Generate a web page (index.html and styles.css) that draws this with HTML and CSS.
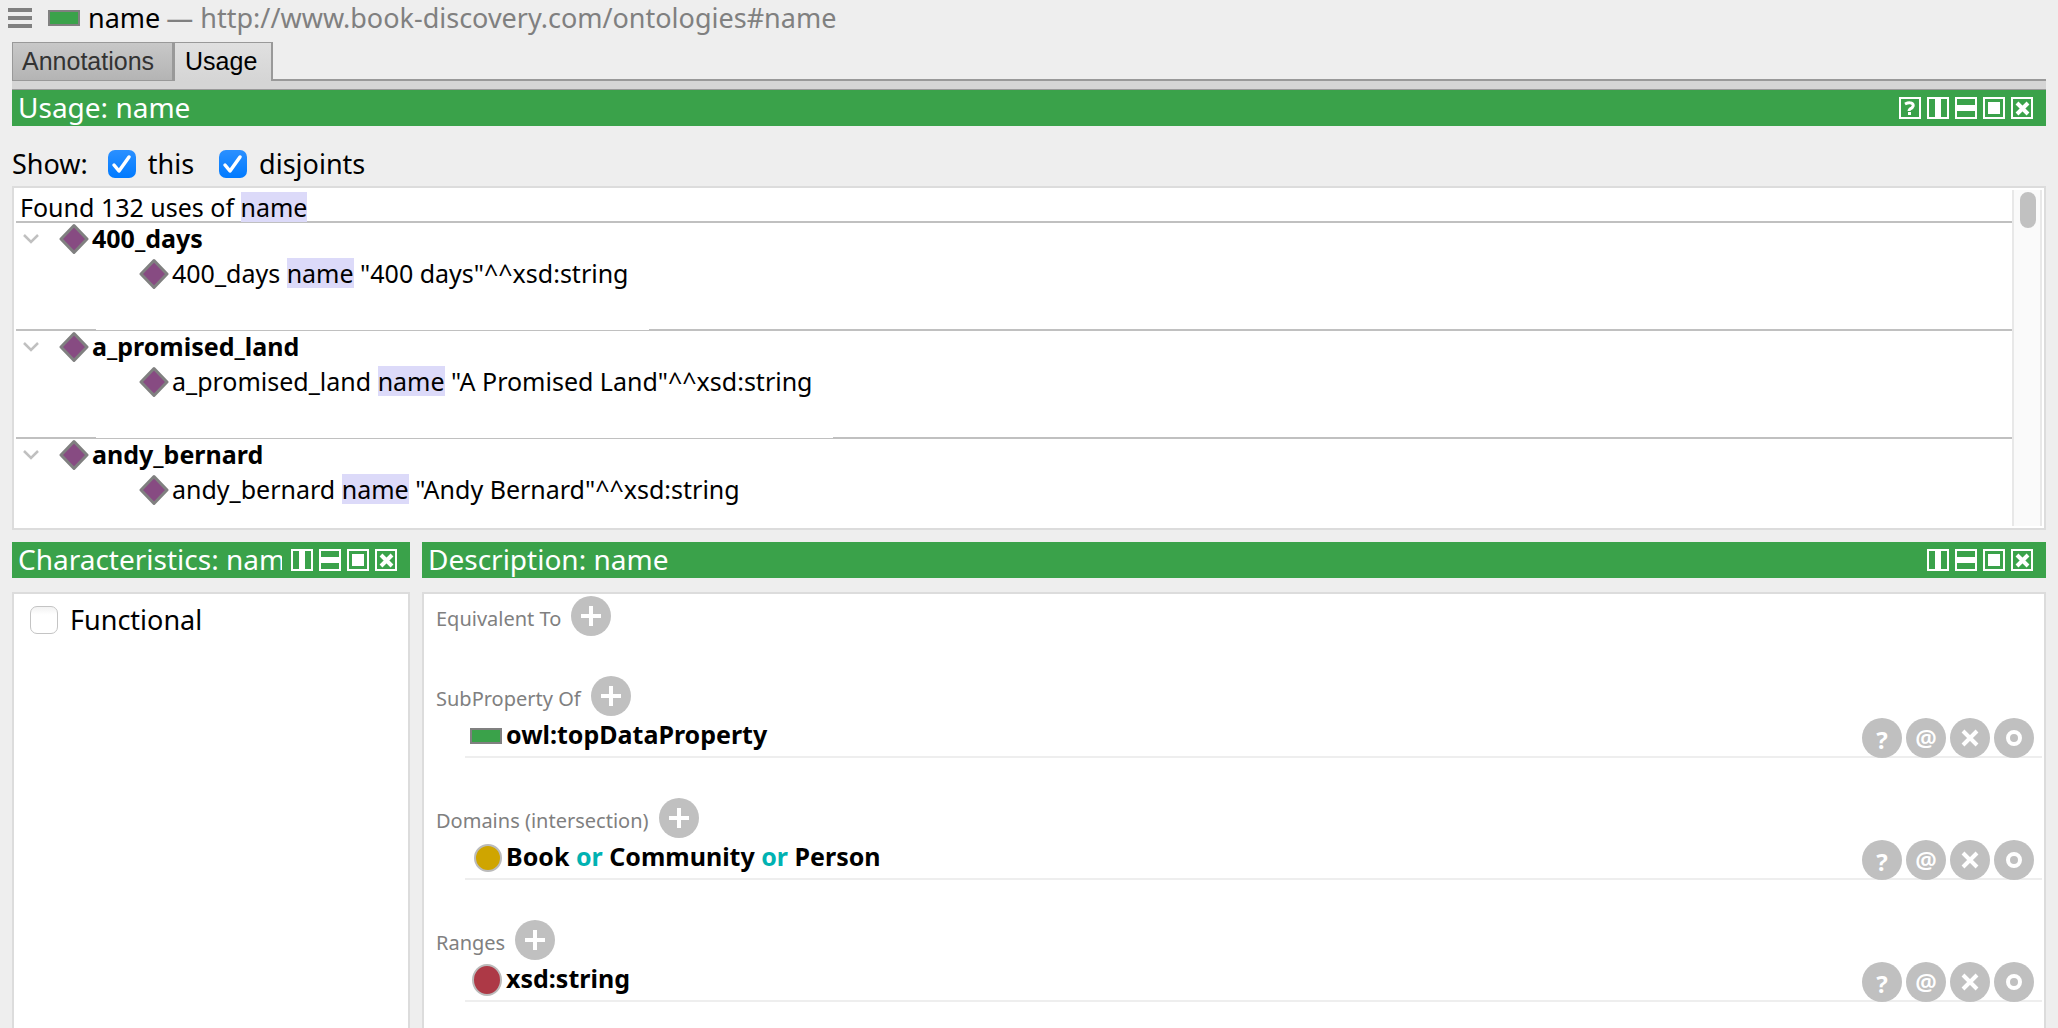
FILE: index.html
```html
<!DOCTYPE html>
<html lang="en">
<head>
<meta charset="utf-8">
<title>name</title>
<link rel="stylesheet" href="styles.css">
</head>
<body>
<svg class="defs" aria-hidden="true">
  <symbol id="i-help" viewBox="0 0 22 22"><path d="M1 1h20v20H1z" fill="none" stroke="currentColor" stroke-width="2"/><path d="M6 7q4-2 6-1c4 1 2 5-1 6q-1 1-1 2" fill="none" stroke="currentColor" stroke-width="3"/><path d="M9 15h3v3H9z" fill="currentColor"/></symbol>
  <symbol id="i-columns" viewBox="0 0 22 22"><path d="M1 1h20v20H1z" fill="none" stroke="currentColor" stroke-width="2"/><path d="M8 1h6v20H8z" fill="currentColor"/></symbol>
  <symbol id="i-rows" viewBox="0 0 22 22"><path d="M1 1h20v20H1z" fill="none" stroke="currentColor" stroke-width="2"/><path d="M1 8h20v6H1z" fill="currentColor"/></symbol>
  <symbol id="i-float" viewBox="0 0 22 22"><path d="M1 1h20v20H1z" fill="none" stroke="currentColor" stroke-width="2"/><path d="M5 5h12v12H5z" fill="currentColor"/></symbol>
  <symbol id="i-close" viewBox="0 0 22 22"><path d="M1 1h20v20H1z" fill="none" stroke="currentColor" stroke-width="2"/><path d="M6 6l11 11M17 6L6 17" fill="none" stroke="currentColor" stroke-width="4"/></symbol>
  <symbol id="i-plus" viewBox="0 0 40 40"><circle cx="20" cy="20" r="20" fill="#c0c0c0"/><path d="M20 10v20M10 20h20" stroke="#fff" stroke-width="4"/></symbol>
  <symbol id="i-delete" viewBox="0 0 40 40"><path d="M13 13l14 14M27 13L13 27" stroke="#fff" stroke-width="4"/></symbol>
  <symbol id="i-edit" viewBox="0 0 40 40"><circle cx="20" cy="20" r="6" fill="none" stroke="#fff" stroke-width="4"/></symbol>
  <symbol id="i-chevron" viewBox="0 0 16 10"><path d="M1 1l7 7 7-7" fill="none" stroke="#c0c0c0" stroke-width="2.5"/></symbol>
  <symbol id="i-individual" viewBox="0 0 30 32"><path d="M15 2.500L28 16 15 29.500 2 16z" fill="#874b82" stroke="#808080" stroke-width="3" stroke-linejoin="round"/></symbol>
</svg>

<header class="entity-bar">
  <button class="menu" aria-label="Menu"><span class="bar"></span><span class="bar"></span><span class="bar"></span></button>
  <span class="property-icon"></span>
  <h1 class="entity-name">name</h1>
  <span class="entity-iri">— http://www.book-discovery.com/ontologies#name</span>
</header>

<nav class="tabs" role="tablist">
  <button class="tab" role="tab">Annotations</button>
  <button class="tab tab-active" role="tab" aria-selected="true">Usage</button>
</nav>

<main class="views">
  <section>
    <header class="view-head">
      <h2 class="view-title">Usage: name</h2>
      <div class="view-tools">
        <button class="tool" aria-label="Help"><svg><use href="#i-help"/></svg></button>
        <button class="tool" aria-label="Split vertically"><svg><use href="#i-columns"/></svg></button>
        <button class="tool" aria-label="Split horizontally"><svg><use href="#i-rows"/></svg></button>
        <button class="tool" aria-label="Float"><svg><use href="#i-float"/></svg></button>
        <button class="tool" aria-label="Close"><svg><use href="#i-close"/></svg></button>
      </div>
    </header>
    <div class="filters">
      <span class="filters-label">Show:</span>
      <label class="check"><input type="checkbox" checked>this</label>
      <label class="check"><input type="checkbox" checked>disjoints</label>
    </div>
    <div class="usage">
      <div class="usage-list">
        <p class="found">Found 132 uses of <mark>name</mark></p>
        <div class="group">
          <h3 class="group-title"><svg class="chevron"><use href="#i-chevron"/></svg><svg class="individual"><use href="#i-individual"/></svg><span>400_days</span></h3>
          <p class="axiom"><svg class="individual"><use href="#i-individual"/></svg><span>400_days <mark>name</mark> "400 days"^^xsd:string</span></p>
        </div>
        <div class="group">
          <h3 class="group-title"><svg class="chevron"><use href="#i-chevron"/></svg><svg class="individual"><use href="#i-individual"/></svg><span>a_promised_land</span></h3>
          <p class="axiom"><svg class="individual"><use href="#i-individual"/></svg><span>a_promised_land <mark>name</mark> "A Promised Land"^^xsd:string</span></p>
        </div>
        <div class="group">
          <h3 class="group-title"><svg class="chevron"><use href="#i-chevron"/></svg><svg class="individual"><use href="#i-individual"/></svg><span>andy_bernard</span></h3>
          <p class="axiom"><svg class="individual"><use href="#i-individual"/></svg><span>andy_bernard <mark>name</mark> "Andy Bernard"^^xsd:string</span></p>
        </div>
      </div>
      <div class="scrollbar"><div class="thumb"></div></div>
    </div>
  </section>

  <div class="lower">
    <section class="view characteristics">
      <header class="view-head">
        <h2 class="view-title">Characteristics: name</h2>
        <div class="view-tools">
          <button class="tool" aria-label="Split vertically"><svg><use href="#i-columns"/></svg></button>
          <button class="tool" aria-label="Split horizontally"><svg><use href="#i-rows"/></svg></button>
          <button class="tool" aria-label="Float"><svg><use href="#i-float"/></svg></button>
          <button class="tool" aria-label="Close"><svg><use href="#i-close"/></svg></button>
        </div>
      </header>
      <div class="pane characteristics-pane">
        <label class="check"><input type="checkbox">Functional</label>
      </div>
    </section>

    <section class="view">
      <header class="view-head">
        <h2 class="view-title">Description: name</h2>
        <div class="view-tools">
          <button class="tool" aria-label="Split vertically"><svg><use href="#i-columns"/></svg></button>
          <button class="tool" aria-label="Split horizontally"><svg><use href="#i-rows"/></svg></button>
          <button class="tool" aria-label="Float"><svg><use href="#i-float"/></svg></button>
          <button class="tool" aria-label="Close"><svg><use href="#i-close"/></svg></button>
        </div>
      </header>
      <div class="pane description-pane">
        <div class="slot">
          <h3 class="slot-head"><span class="slot-label">Equivalent To</span><button class="add" aria-label="Add"><svg><use href="#i-plus"/></svg></button></h3>
        </div>
        <div class="slot">
          <h3 class="slot-head"><span class="slot-label">SubProperty Of</span><button class="add" aria-label="Add"><svg><use href="#i-plus"/></svg></button></h3>
          <div class="row">
            <span class="row-icon"><span class="property-icon"></span></span>
            <span class="row-text">owl:topDataProperty</span>
            <button class="action action-help" aria-label="Explain">?</button>
            <button class="action" aria-label="Annotate">@</button>
            <button class="action" aria-label="Delete"><svg><use href="#i-delete"/></svg></button>
            <button class="action" aria-label="Edit"><svg><use href="#i-edit"/></svg></button>
          </div>
        </div>
        <div class="slot">
          <h3 class="slot-head"><span class="slot-label">Domains (intersection)</span><button class="add" aria-label="Add"><svg><use href="#i-plus"/></svg></button></h3>
          <div class="row">
            <span class="row-icon"><span class="class-icon"></span></span>
            <span class="row-text">Book <span class="keyword">or</span> Community <span class="keyword">or</span> Person</span>
            <button class="action action-help" aria-label="Explain">?</button>
            <button class="action" aria-label="Annotate">@</button>
            <button class="action" aria-label="Delete"><svg><use href="#i-delete"/></svg></button>
            <button class="action" aria-label="Edit"><svg><use href="#i-edit"/></svg></button>
          </div>
        </div>
        <div class="slot">
          <h3 class="slot-head"><span class="slot-label">Ranges</span><button class="add" aria-label="Add"><svg><use href="#i-plus"/></svg></button></h3>
          <div class="row">
            <span class="row-icon"><span class="datatype-icon"></span></span>
            <span class="row-text">xsd:string</span>
            <button class="action action-help" aria-label="Explain">?</button>
            <button class="action" aria-label="Annotate">@</button>
            <button class="action" aria-label="Delete"><svg><use href="#i-delete"/></svg></button>
            <button class="action" aria-label="Edit"><svg><use href="#i-edit"/></svg></button>
          </div>
        </div>
      </div>
    </section>
  </div>
</main>
</body>
</html>
```
FILE: styles.css
```css
* { box-sizing: border-box; }

body {
  margin: 0;
  height: 100vh;
  overflow: hidden;
  display: flex;
  flex-direction: column;
  background: #eee;
  color: #000;
  font: 25px/30px "Noto Sans", "Open Sans", sans-serif;
}

h1, h2, h3, p { margin: 0; font-size: inherit; font-weight: normal; }
button { padding: 0; border: 0; background: none; color: inherit; font: inherit; }
svg { display: block; flex: none; }
mark { display: inline-block; height: 30px; background: #dcdaf9; color: inherit; }
.defs { position: absolute; width: 0; height: 0; }

/* Selected entity */
.entity-bar {
  display: flex;
  align-items: center;
  height: 42px;
  padding: 0 8px 6px;
  font-size: 27px;
}
.menu { display: grid; gap: 4px; width: 24px; margin-right: 16px; }
.bar { height: 4px; background: #808080; }
.property-icon {
  flex: none;
  width: 32px;
  height: 16px;
  border: 2px solid #808080;
  background: #3aa24a;
}
.entity-name { margin: 0 6px 0 8px; }
.entity-iri { color: #808080; white-space: nowrap; }

/* Tabs */
.tabs {
  display: flex;
  align-items: flex-start;
  height: 39px;
  margin: 0 12px;
  border-bottom: 2px solid #999;
  font: 25px/36px "Liberation Sans", Arial, sans-serif;
}
.tab {
  height: 39px;
  padding: 0 18px 2px 9px;
  border: 1px solid #999;
  border-right-width: 2px;
  background: linear-gradient(#c8c8c8, #b4b4b4);
  color: #333;
}
.tab-active {
  padding: 0 14px 2px 10px;
  border-bottom: 0;
  background: linear-gradient(#e0e0e0, #d5d5d5);
  color: #000;
}

/* Views */
.views {
  flex: 1;
  min-height: 0;
  display: flex;
  flex-direction: column;
  gap: 12px;
  margin: 0 12px;
  border-top: 8px solid #d5d5d5;
}
.view-head {
  display: flex;
  align-items: center;
  gap: 9px;
  height: 36px;
  padding: 0 13px 0 6px;
  background: #3aa24a;
  color: #fff;
}
.views > section > .view-head { height: 37px; border-top: 1px solid #999; }
.view-title {
  flex: 1;
  min-width: 0;
  height: 36px;
  overflow: hidden;
  font-size: 28px;
  line-height: 34px;
  white-space: nowrap;
}
.view-tools { display: flex; gap: 6px; }
.tool, .tool svg { width: 22px; height: 22px; }

/* Usage */
.filters {
  display: flex;
  align-items: center;
  gap: 20px;
  height: 60px;
  padding-top: 16px;
  font-size: 27px;
}
.check { display: flex; align-items: center; gap: 12px; margin-right: 5px; }
.check input {
  appearance: none;
  width: 28px;
  height: 28px;
  margin: 0;
  border: 1px solid #c4c4c4;
  border-radius: 7px;
  background: linear-gradient(#f2f2f2, #fff 30%);
}
.check input:checked {
  border: 0;
  background:
    url("data:image/svg+xml,%3Csvg xmlns='http://www.w3.org/2000/svg' viewBox='0 0 28 28'%3E%3Cpath d='M6 15l5 6L21 7' fill='none' stroke='white' stroke-width='3.500' stroke-linecap='round' stroke-linejoin='round'/%3E%3C/svg%3E"),
    linear-gradient(#2b90ff, #007aff);
}
.usage {
  display: flex;
  padding: 2px;
  border: 2px solid #dcdcdc;
  background: #fff;
}
.usage-list { flex: 1; padding-top: 2px; }
.found { height: 29px; padding-left: 4px; }
.group { border-top: 2px solid silver; }
.group-title { display: flex; align-items: flex-start; height: 34px; font-weight: bold; }
.chevron { width: 16px; height: 10px; margin: 11px 20px 0 7px; }
.individual { width: 30px; height: 32px; margin-right: 3px; }
.axiom {
  position: relative;
  display: flex;
  width: fit-content;
  height: 73px;
  margin: 0 0 -1px 80px;
  padding: 1px 20px 0 43px;
  background: #fff;
}
.group:last-child .axiom { height: 54px; }
.scrollbar {
  width: 30px;
  padding: 2px 4px 0 6px;
  border: solid #e8e8e8;
  border-width: 0 2px;
  background: #fafafa;
}
.thumb { width: 16px; height: 36px; border-radius: 8px; background: #c1c1c1; }

/* Characteristics and description */
.lower { flex: 1; min-height: 0; display: flex; gap: 12px; }
.view { flex: 1; min-width: 0; display: flex; flex-direction: column; gap: 14px; }
.characteristics { flex: 0 0 398px; }
.pane { flex: 1; min-height: 0; border: 2px solid #dcdcdc; border-bottom: 0; background: #fff; }
.characteristics-pane { padding: 11px 16px; font-size: 27px; }
.description-pane { display: grid; align-content: start; gap: 40px; padding: 2px 2px 0 12px; }
.slot-head {
  display: flex;
  align-items: center;
  gap: 8px;
  height: 40px;
  color: #808080;
  font-size: 20px;
}
.slot-label { padding: 5px 2px 0 0; }
.add, .add svg { width: 40px; height: 40px; }
.row {
  display: flex;
  align-items: flex-start;
  gap: 4px;
  height: 42px;
  margin-left: 29px;
  padding: 2px 8px 0 5px;
  background: linear-gradient(#eee, #eee) bottom / 100% 2px no-repeat;
}
.row-icon { display: flex; align-items: center; justify-content: flex-end; width: 32px; height: 36px; }
.class-icon, .datatype-icon { width: 28px; height: 28px; border: 2px solid #bbb; border-radius: 50%; background: #cfa500; }
.datatype-icon { width: 30px; height: 32px; background: #ad3946; }
.row-text { flex: 1; font-weight: bold; line-height: 32px; }
.keyword { color: #00b2b2; }
.action {
  width: 40px;
  height: 40px;
  border-radius: 50%;
  background: #c0c0c0;
  color: #fff;
  font-size: 24px;
  font-weight: 600;
  line-height: 40px;
}
.action svg { width: 40px; height: 40px; }
.action-help { padding-top: 2px; font-weight: bold; }
```
